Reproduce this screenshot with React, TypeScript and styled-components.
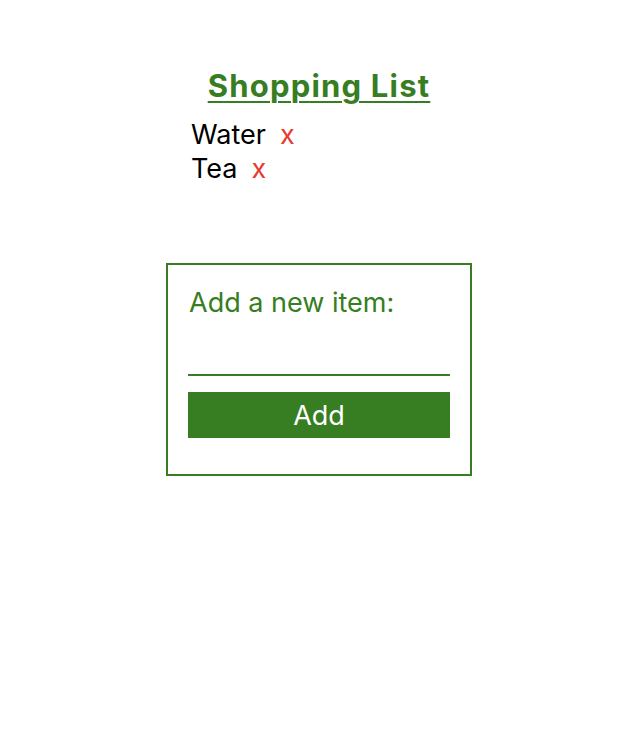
import React, { useState } from "react";
import styled, { createGlobalStyle } from "styled-components";

const GREEN = "#377d22";

const Global = createGlobalStyle`
  html, body { margin: 0; padding: 0; background: #fff; }
  body { font-family: Inter, "Noto Sans", sans-serif; }
`;

const Page = styled.div`
  width: 638px;
  padding-top: 64px;
  display: flex;
  flex-direction: column;
  align-items: center;
`;

const Title = styled.h1`
  margin: 0;
  font-size: 31px;
  font-weight: 700;
  letter-spacing: 1.2px;
  color: ${GREEN};
  text-decoration: underline;
  text-underline-offset: 4px;
  text-decoration-thickness: 2px;
  line-height: 44px;
`;

const List = styled.ul`
  list-style: none;
  margin: 10px 0 0 0;
  padding: 0 0 0 191px;
  align-self: stretch;
`;

const Item = styled.li`
  font-size: 27px;
  line-height: 34px;
  color: #000;
`;

const Remove = styled.button`
  border: none;
  background: none;
  padding: 0;
  margin-left: 14px;
  font: inherit;
  color: #e8392c;
  cursor: pointer;
`;

const Card = styled.form`
  margin-top: 77px;
  border: 2px solid ${GREEN};
  padding: 21px 20px 36px 20px;
  box-sizing: content-box;
  width: 262px;
  display: flex;
  flex-direction: column;
`;

const Label = styled.label`
  font-size: 27px;
  color: ${GREEN};
  line-height: 34px;
  padding-left: 1px;
`;

const Input = styled.input`
  margin-top: 22px;
  border: none;
  border-bottom: 2px solid ${GREEN};
  height: 32px;
  padding: 0;
  font: inherit;
  font-size: 22px;
  outline: none;
`;

const AddButton = styled.button`
  margin-top: 16px;
  height: 46px;
  border: none;
  background: ${GREEN};
  color: #fff;
  font-family: inherit;
  font-size: 27px;
  cursor: pointer;
`;

export default function App() {
  const [items, setItems] = useState<string[]>(["Water", "Tea"]);
  const [value, setValue] = useState("");
  return (
    <>
      <Global />
      <Page>
        <Title>Shopping List</Title>
        <List>
          {items.map((it, i) => (
            <Item key={it + i}>
              {it}
              <Remove type="button" onClick={() => setItems(items.filter((_, j) => j !== i))}>
                x
              </Remove>
            </Item>
          ))}
        </List>
        <Card
          onSubmit={(e) => {
            e.preventDefault();
            if (value.trim()) setItems([...items, value.trim()]);
            setValue("");
          }}
        >
          <Label htmlFor="new-item">Add a new item:</Label>
          <Input id="new-item" value={value} onChange={(e) => setValue(e.target.value)} />
          <AddButton type="submit">Add</AddButton>
        </Card>
      </Page>
    </>
  );
}
